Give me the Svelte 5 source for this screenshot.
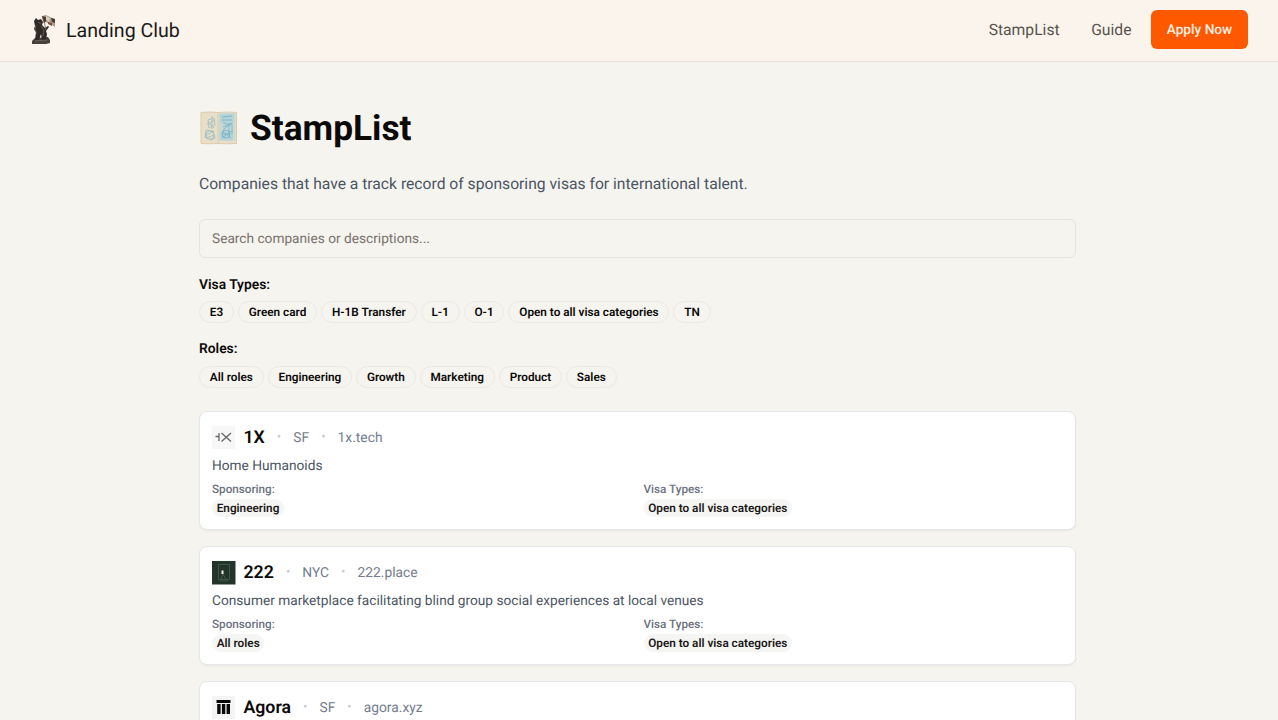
<script>
  const visas = ['E3', 'Green card', 'H-1B Transfer', 'L-1', 'O-1', 'Open to all visa categories', 'TN'];
  const roles = ['All roles', 'Engineering', 'Growth', 'Marketing', 'Product', 'Sales'];
  const companies = [
    { name: '1X', city: 'SF', site: '1x.tech', about: 'Home Humanoids', role: 'Engineering' },
    { name: '222', city: 'NYC', site: '222.place', about: 'Consumer marketplace facilitating blind group social experiences at local venues', role: 'All roles' },
    { name: 'Agora', city: 'SF', site: 'agora.xyz' }
  ];
</script>

<div class="page">
  <header>
    <div class="brand">
      <svg width="26" height="32" viewBox="0 0 26 32">
        <path d="M2 27l3-3 13-1 2 3v3l-4 1H2z" fill="#45403b" />
        <path d="M5 12l-1-5 2-3 2 2 3-1 2 3-1 3 3 3 3-2 1 1-3 4 1 3-1 6h-4l-1-6-2 6H5l1-8-2-3z" fill="#302a27" />
        <path d="M6 11l-1 5 2 4M11 12l3 4-1 6M8 8l3 2M5 27l12-1" fill="none" stroke="#806f61" stroke-width=".7" />
        <path d="M16 16L13 2" stroke="#72655a" stroke-width=".8" />
        <path d="M12 2l4-1 4 2 5 2v8l-3-2-3-1-3-2-3 1z" fill="#aa9b89" />
        <path d="M12 2l4 1 1 3-3 3zM21 4l4 1v4l-3-1z" fill="#4c3e35" />
        <path d="M16 2l4 2-1 4-3-2z" fill="#d9cfc0" />
        <path d="M18 8l4 1v3l-4-2z" fill="#7c5140" />
      </svg>
      <span>Landing Club</span>
    </div>
    <nav><span>StampList</span><span>Guide</span><button>Apply Now</button></nav>
  </header>
  <main>
    <h1>
      <svg width="38" height="36" viewBox="0 0 38 36">
        <path d="M2 2.500Q10 1.500 19 2.500Q28 1.500 37.500 2.500V33.500Q28 34 19 33.500Q10 34 2 33.500z" fill="#e9dfc8" stroke="#dfcbaa" />
        <path d="M20 3Q28 2 36.500 3.500V31H20z" fill="#c9d9d4" />
        <path d="M21 4h14v9H21zM21 21h13v9H21z" fill="#acd0d7" opacity=".65" />
        <g fill="none" stroke="#a8c3c5" stroke-width="1">
          <path d="M9 10l6-2 1 7-6 3zM8 14l8-4M9 12l6 6M13 6v13M7 20l7 1 2 7-4 2-6-3zM6 26l9-5M7 28l8-3" />
          <circle cx="11" cy="25" r="4" />
        </g>
        <g fill="none" stroke="#81b5ca" stroke-width="1">
          <path d="M23 7l10-1M23 10h10M24 13l8 2M24 17l9-4M24 20l7-6M30 13v12M33 14v10" />
          <circle cx="27" cy="24" r="4" />
          <path d="M23 21l9 7M23 28l9-7M24 24h7" />
        </g>
        <path d="M19 3v30" stroke="#d8c9ab" />
      </svg>
      <span>StampList</span>
    </h1>
    <p class="intro">Companies that have a track record of sponsoring visas for international talent.</p>
    <input placeholder="Search companies or descriptions..." />
    <h2>Visa Types:</h2>
    <div class="filters">{#each visas as visa}<button>{visa}</button>{/each}</div>
    <h2 class="roles">Roles:</h2>
    <div class="filters">{#each roles as role}<button>{role}</button>{/each}</div>
    <div class="list">
      {#each companies as company, i}
        <article>
          <div class="heading">
            <svg width="24" height="24" viewBox="0 0 24 24">
              {#if i === 0}
                <path d="M0 0h23v23H0z" fill="#f7f7f7" />
                <path d="M3.500 10.500h4M7 7v8M9.500 7l9.500 8.500M19 7L9.500 15.500" fill="none" stroke="#666" stroke-width="1.300" />
              {:else if i === 1}
                <path d="M0 0h23.500v23.500H0z" fill="#23342a" />
                <path d="M6.500 3.500h11v15h-11zM8 20h8M9 18l2-5 3 5" fill="none" stroke="#53645a" stroke-width=".7" />
                <path d="M9.500 9.500h2v3.500h-2z" fill="#eef2e9" />
              {:else}
                <path d="M0 0h23v23H0z" fill="#f4f4f4" />
                <path d="M4.500 4h14v3h-14zM5.200 8h3.400v10H5.200zM9.900 8h3.400v10H9.900zM14.600 8H18v10h-3.400z" fill="#090909" />
              {/if}
            </svg>
            <h3>{company.name}</h3><i>•</i><span>{company.city}</span><i>•</i><span>{company.site}</span>
          </div>
          {#if company.about}
            <p>{company.about}</p>
            <div class="details">
              <div><small>Sponsoring:</small><b>{company.role}</b></div>
              <div><small>Visa Types:</small><b>Open to all visa categories</b></div>
            </div>
          {/if}
        </article>
      {/each}
    </div>
  </main>
</div>

<style>
  :global(body) { margin: 0; background: #f5f4ef; }
  * { box-sizing: border-box; }
  .page { height: 720px; overflow: hidden; font-family: Roboto, sans-serif; color: #0c0a09; background: #f5f4ef; text-rendering: geometricPrecision; }
  button, input { text-rendering: geometricPrecision; }
  header { height: 62px; display: flex; align-items: center; justify-content: space-between; padding: 0 30px 2px; background: #fbf4ed; border-bottom: 1px solid #eadfd8; }
  .brand { display: flex; align-items: center; gap: 10px; color: #1c1917; font-size: 19.600px; }
  .brand span { padding-top: 1px; }
  nav { display: flex; align-items: center; color: #57534e; font-size: 15.700px; }
  nav span { margin-right: 31.500px; }
  nav span:nth-child(2) { margin-right: 19.500px; }
  nav button { width: 97px; height: 39px; border: 0; border-radius: 6px; padding: 1px 0 0; color: #fff1e6; background: #ff5900; font: 500 13.700px Roboto, sans-serif; }
  main { width: 877px; margin: 0 auto; position: relative; left: -1.500px; padding-top: 46px; }
  h1 { margin: 0; height: 40px; display: flex; align-items: center; gap: 13px; font-size: 35.300px; line-height: 40px; font-weight: 700; }
  .intro { margin: 23.500px 0 23px; font-size: 15.670px; line-height: 24px; color: #4b5563; }
  input { display: block; width: 100%; height: 39px; padding: 2px 12px 0; border: 1px solid #e6e4df; border-radius: 6px; background: transparent; font: 13.700px Roboto, sans-serif; }
  input::placeholder { color: #78716c; opacity: 1; }
  h2 { margin: 17px 0 6px; font-size: 13.800px; line-height: 20px; font-weight: 600; }
  h2.roles { margin: 16px 0 7px; }
  .filters { display: flex; gap: 4px; }
  .filters button { height: 22px; padding: 0 9.820px; border: 1px solid #ebe9e4; border-radius: 12px; background: transparent; color: #0c0a09; font: 600 11.780px Roboto, sans-serif; white-space: nowrap; }
  .list { display: flex; flex-direction: column; gap: 16.500px; margin-top: 23.500px; }
  article { height: 118.500px; flex: none; padding: 13.500px 12px 12px; border: 1px solid #e6e7e8; border-radius: 8px; background: #fff; box-shadow: 0 1px 2px #0000000d; }
  .heading { display: flex; align-items: center; height: 24px; font-size: 13.800px; color: #737d8c; }
  h3 { margin: 0 0 0 7.500px; font-size: 17.700px; font-weight: 600; color: #0c0a09; }
  i { margin: 0 12.050px; font-style: normal; font-size: 13px; line-height: 16px; color: #c7cbd2; }
  article p { margin: 6.500px 0 4.600px; font-size: 13.700px; line-height: 20px; color: #4b5563; }
  .details { display: grid; grid-template-columns: 1fr 1fr; gap: 12px; }
  small { display: block; font-size: 11.700px; line-height: 16px; font-weight: 500; color: #6b7280; }
  b { display: inline-block; margin-top: 2px; height: 18px; padding: 0 4.700px; border-radius: 9px; background: #f5f5f4; color: #1c1917; font-size: 11.750px; line-height: 18px; font-weight: 600; vertical-align: top; }
</style>
